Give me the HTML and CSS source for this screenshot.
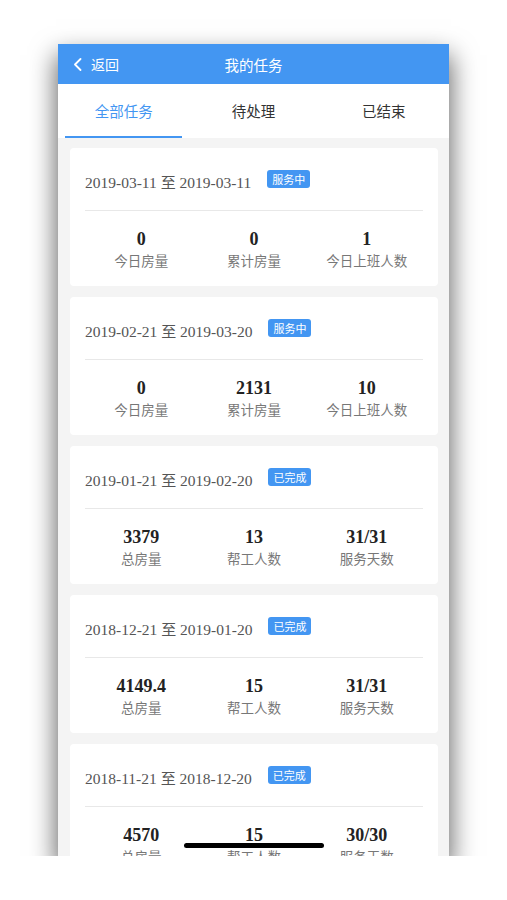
FILE: index.html
```html
<!DOCTYPE html>
<html lang="zh-CN">
<head>
    <meta charset="UTF-8">
    <meta name="viewport" content="width=device-width, initial-scale=1.0">
    <title>我的任务</title>
    <link rel="stylesheet" href="styles.css">
</head>
<body>
    <div class="phone">
        <div class="navbar">
            <div class="back">
                <svg class="back-icon" width="9" height="13" viewBox="0 0 9 13">
                    <path d="M7.5 1 L2 6.5 L7.5 12" fill="none" stroke="#fff" stroke-width="1.8" stroke-linecap="round" stroke-linejoin="round"/>
                </svg>
                <span>返回</span>
            </div>
            <div class="title">我的任务</div>
        </div>

        <div class="tabs">
            <div class="tab active">全部任务</div>
            <div class="tab">待处理</div>
            <div class="tab">已结束</div>
        </div>

        <div class="list">
            <div class="card">
                <div class="card-head">
                    <span class="date">2019-03-11 <span class="to">至</span> 2019-03-11</span>
                    <span class="badge">服务中</span>
                </div>
                <div class="divider"></div>
                <div class="stats">
                    <div class="stat"><div class="num">0</div><div class="label">今日房量</div></div>
                    <div class="stat"><div class="num">0</div><div class="label">累计房量</div></div>
                    <div class="stat"><div class="num">1</div><div class="label">今日上班人数</div></div>
                </div>
            </div>

            <div class="card">
                <div class="card-head">
                    <span class="date">2019-02-21 <span class="to">至</span> 2019-03-20</span>
                    <span class="badge">服务中</span>
                </div>
                <div class="divider"></div>
                <div class="stats">
                    <div class="stat"><div class="num">0</div><div class="label">今日房量</div></div>
                    <div class="stat"><div class="num">2131</div><div class="label">累计房量</div></div>
                    <div class="stat"><div class="num">10</div><div class="label">今日上班人数</div></div>
                </div>
            </div>

            <div class="card">
                <div class="card-head">
                    <span class="date">2019-01-21 <span class="to">至</span> 2019-02-20</span>
                    <span class="badge">已完成</span>
                </div>
                <div class="divider"></div>
                <div class="stats">
                    <div class="stat"><div class="num">3379</div><div class="label">总房量</div></div>
                    <div class="stat"><div class="num">13</div><div class="label">帮工人数</div></div>
                    <div class="stat"><div class="num">31/31</div><div class="label">服务天数</div></div>
                </div>
            </div>

            <div class="card">
                <div class="card-head">
                    <span class="date">2018-12-21 <span class="to">至</span> 2019-01-20</span>
                    <span class="badge">已完成</span>
                </div>
                <div class="divider"></div>
                <div class="stats">
                    <div class="stat"><div class="num">4149.4</div><div class="label">总房量</div></div>
                    <div class="stat"><div class="num">15</div><div class="label">帮工人数</div></div>
                    <div class="stat"><div class="num">31/31</div><div class="label">服务天数</div></div>
                </div>
            </div>

            <div class="card">
                <div class="card-head">
                    <span class="date">2018-11-21 <span class="to">至</span> 2018-12-20</span>
                    <span class="badge">已完成</span>
                </div>
                <div class="divider"></div>
                <div class="stats">
                    <div class="stat"><div class="num">4570</div><div class="label">总房量</div></div>
                    <div class="stat"><div class="num">15</div><div class="label">帮工人数</div></div>
                    <div class="stat"><div class="num">30/30</div><div class="label">服务天数</div></div>
                </div>
            </div>
        </div>

        <div class="home-bar"></div>
    </div>
</body>
</html>
```

FILE: styles.css
```css
body {
    margin: 0;
    background-color: #fff;
    font-family: 'Noto Sans CJK SC', 'Noto Sans', sans-serif;
}

.phone {
    position: relative;
    width: 391px;
    height: 812px;
    margin: 44px 0 0 58px;
    background-color: #f4f4f4;
    overflow: hidden;
    display: flex;
    flex-direction: column;
    box-shadow: 0 13px 24px 2px rgba(0, 0, 0, 0.6);
}

.navbar {
    position: relative;
    flex: none;
    height: 40px;
    background-color: #4396f2;
    color: #fff;
    display: flex;
    align-items: center;
    justify-content: center;
}

.back {
    position: absolute;
    left: 15px;
    top: 0;
    height: 40px;
    display: flex;
    align-items: center;
    gap: 9px;
    font-size: 14px;
}

.title {
    font-size: 14.5px;
}

.tabs {
    flex: none;
    height: 54px;
    background-color: #fff;
    display: grid;
    grid-template-columns: repeat(3, 1fr);
}

.tab {
    display: flex;
    align-items: center;
    justify-content: center;
    font-size: 14.5px;
    color: #333;
    padding-bottom: 2px;
    box-sizing: border-box;
}

.tab.active {
    color: #4396f2;
    border-bottom: 2px solid #4396f2;
    margin: 0 6px 0 7px;
    padding-bottom: 0;
}

.list {
    display: flex;
    flex-direction: column;
    gap: 11px;
    padding: 10px 11px 0 12px;
}

.card {
    flex: none;
    background-color: #fff;
    border-radius: 4px;
}

.card-head {
    height: 62px;
    box-sizing: border-box;
    padding: 4px 15px 0;
    display: flex;
    align-items: center;
    gap: 16px;
}

.date {
    font-family: 'Liberation Serif', 'Noto Sans CJK SC', serif;
    font-size: 15.5px;
    color: #555;
}

.date .to {
    font-family: 'Noto Sans CJK SC', sans-serif;
    font-size: 15px;
}

.badge {
    background-color: #4396f2;
    color: #fff;
    font-size: 11px;
    line-height: 18px;
    padding: 0 5px;
    border-radius: 3px;
    margin-top: -4px;
}

.divider {
    height: 1px;
    margin: 0 15px;
    background-color: #e8e8e8;
}

.stats {
    display: grid;
    grid-template-columns: repeat(3, 1fr);
    padding: 17px 15px 16px;
    text-align: center;
}

.num {
    font-family: 'Liberation Serif', serif;
    font-weight: bold;
    font-size: 18px;
    line-height: 22px;
    color: #222;
}

.label {
    font-size: 13.5px;
    line-height: 20px;
    color: #777;
}

.home-bar {
    position: absolute;
    left: 126px;
    bottom: 8px;
    width: 140px;
    height: 5px;
    border-radius: 3px;
    background-color: #000;
}
```
